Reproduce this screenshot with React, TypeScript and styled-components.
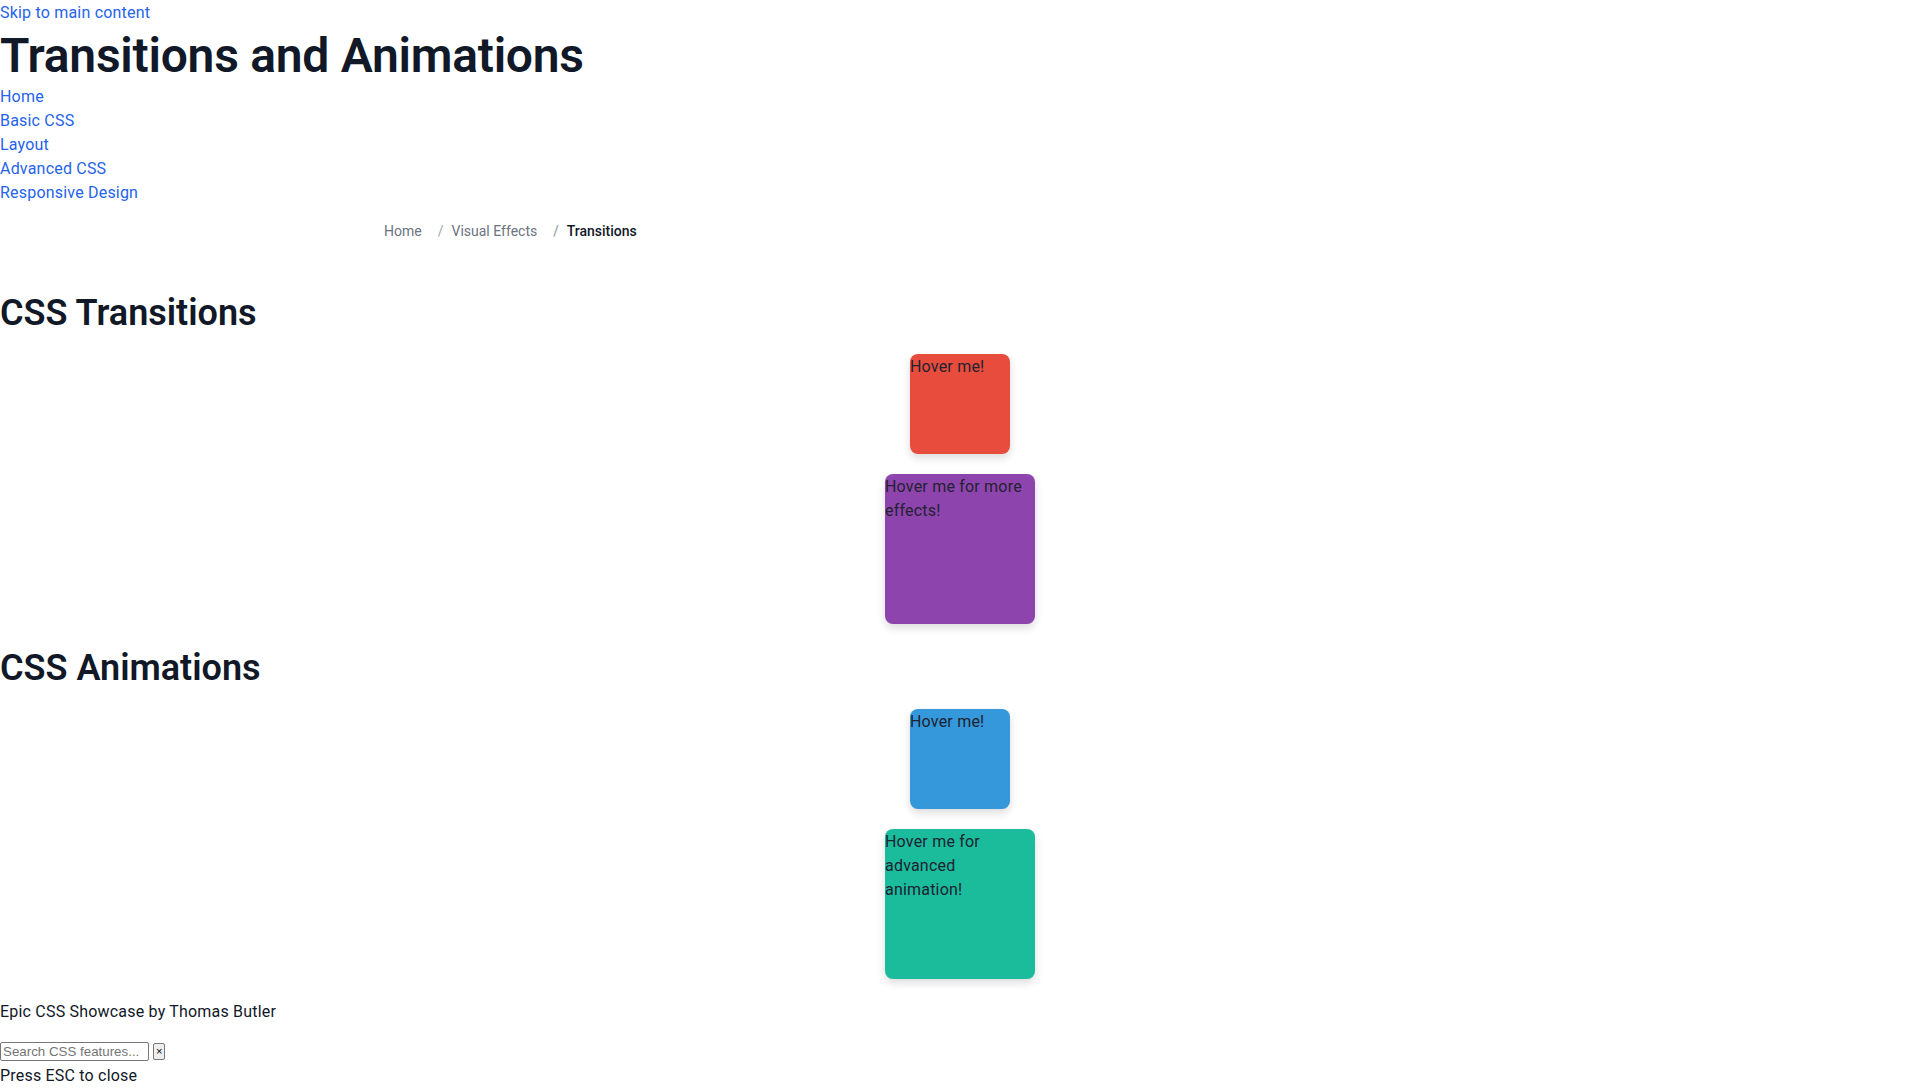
import React from "react";
import styled, { createGlobalStyle } from "styled-components";

const GlobalStyle = createGlobalStyle`
  html, body { margin: 0; padding: 0; background: #ffffff; }
  body {
    font-family: Roboto, "Noto Sans", "Liberation Sans", sans-serif;
    font-size: 16px;
    line-height: 24px;
    letter-spacing: 0.2px;
    color: #111827;
  }
  * { box-sizing: border-box; }
`;

const Page = styled.div`
  display: flex;
  flex-direction: column;
`;

const SkipLink = styled.a`
  color: #2563eb;
  text-decoration: none;
  font-size: 16px;
  line-height: 22px;
  padding-top: 2px;
  align-self: flex-start;
`;

const Title = styled.h1`
  margin: 0;
  padding-top: 4px;
  font-size: 48px;
  line-height: 56px;
  font-weight: 600;
  letter-spacing: -0.25px;
  color: #111827;
`;

const NavList = styled.ul`
  list-style: none;
  margin: 0;
  padding: 0;
`;

const NavItem = styled.li`
  line-height: 22px;
  padding-top: 2px;
`;

const NavLink = styled.a`
  color: #2563eb;
  text-decoration: none;
  font-size: 16px;
`;

const Breadcrumb = styled.nav`
  width: 100%;
  max-width: 1152px;
  margin: 0 auto;
  padding: 17px 0 15px;
`;

const Crumbs = styled.ol`
  list-style: none;
  margin: 0;
  padding: 0;
  display: flex;
  align-items: center;
  gap: 8px;
  font-size: 14px;
  line-height: 20px;
  letter-spacing: 0;
`;

const Crumb = styled.li<{ $current?: boolean }>`
  display: flex;
  align-items: center;
  color: ${(p) => (p.$current ? "#111827" : "#6b7280")};
  font-weight: ${(p) => (p.$current ? 500 : 400)};
`;

const Sep = styled.span`
  color: #9ca3af;
  padding: 0 8px;
`;

const Main = styled.main`
  display: flex;
  flex-direction: column;
  padding-top: 38px;
`;

const Section = styled.section`
  margin-bottom: 25px;
`;

const SectionTitle = styled.h2`
  margin: 0 0 24px;
  padding-top: 2px;
  font-size: 36px;
  line-height: 34px;
  font-weight: 600;
  letter-spacing: 0;
  color: #111827;
`;

const Demo = styled.div`
  display: flex;
  flex-direction: column;
  align-items: center;
  gap: 20px;
`;

const Box = styled.div<{ $color: string; $size: number }>`
  width: ${(p) => p.$size}px;
  height: ${(p) => p.$size}px;
  padding-top: 1px;
  background: ${(p) => p.$color};
  border-radius: 8px;
  box-shadow: 0 4px 8px rgba(0, 0, 0, 0.14);
  color: #1f2230;
  font-size: 16px;
  line-height: 24px;
`;

const Footer = styled.footer`
  margin-top: -5px;
`;

const Credit = styled.p`
  margin: 0 0 19px;
  padding-top: 2px;
  line-height: 22px;
`;

const SearchRow = styled.div`
  display: flex;
  align-items: center;
  gap: 4px;
  letter-spacing: 0;
`;

const SearchInput = styled.input`
  width: 149px;
  height: 19px;
  padding: 1px 2px;
  border: 1px solid #767676;
  border-radius: 2px;
  font-family: "Liberation Sans", Arial, sans-serif;
  font-size: 13.333px;
  color: #111;
  &::placeholder { color: #757575; }
`;

const CloseButton = styled.button`
  height: 17px;
  padding: 0 2px;
  border: 1px solid #767676;
  border-radius: 2px;
  background: #efefef;
  font-family: "Liberation Sans", Arial, sans-serif;
  font-size: 11px;
  line-height: 13px;
  color: #000;
`;

const Hint = styled.div`
  font-size: 16px;
  line-height: 22px;
  padding-top: 2px;
  margin-top: 2px;
`;

export default function App() {
  return (
    <>
      <GlobalStyle />
      <Page>
        <SkipLink href="#main">Skip to main content</SkipLink>
        <Title>Transitions and Animations</Title>
        <NavList>
          {["Home", "Basic CSS", "Layout", "Advanced CSS", "Responsive Design"].map((l) => (
            <NavItem key={l}>
              <NavLink href="#">{l}</NavLink>
            </NavItem>
          ))}
        </NavList>
        <Breadcrumb aria-label="Breadcrumb">
          <Crumbs>
            <Crumb>Home</Crumb>
            <Crumb>
              <Sep>/</Sep>Visual Effects
            </Crumb>
            <Crumb $current>
              <Sep>/</Sep>Transitions
            </Crumb>
          </Crumbs>
        </Breadcrumb>
        <Main id="main">
          <Section>
            <SectionTitle>CSS Transitions</SectionTitle>
            <Demo>
              <Box $color="#e74c3c" $size={100}>Hover me!</Box>
              <Box $color="#8e44ad" $size={150}>Hover me for more effects!</Box>
            </Demo>
          </Section>
          <Section>
            <SectionTitle>CSS Animations</SectionTitle>
            <Demo>
              <Box $color="#3498db" $size={100}>Hover me!</Box>
              <Box $color="#1abc9c" $size={150}>Hover me for advanced animation!</Box>
            </Demo>
          </Section>
        </Main>
        <Footer>
          <Credit>Epic CSS Showcase by Thomas Butler</Credit>
          <SearchRow>
            <SearchInput placeholder="Search CSS features..." />
            <CloseButton>×</CloseButton>
          </SearchRow>
          <Hint>Press ESC to close</Hint>
        </Footer>
      </Page>
    </>
  );
}
